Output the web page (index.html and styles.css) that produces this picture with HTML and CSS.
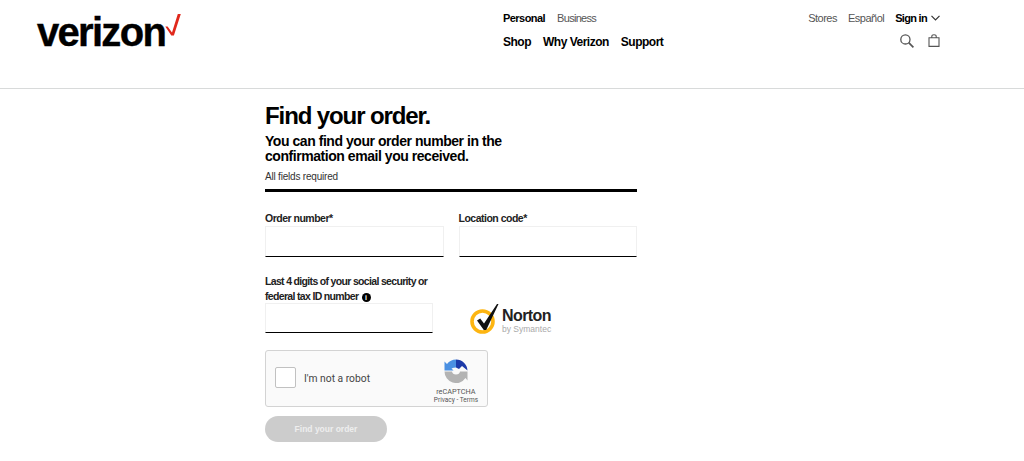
FILE: index.html
```html
<!DOCTYPE html>
<html lang="en">
<head>
    <meta charset="UTF-8">
    <meta name="viewport" content="width=device-width, initial-scale=1.0">
    <title>Find your order</title>
    <link rel="stylesheet" href="styles.css">
</head>
<body>
    <header class="site-header">
        <a class="logo" href="#">
            <span class="logo-word">verizon</span>
            <svg class="logo-check" width="16" height="22" viewBox="0 0 16 22"><path d="M0.3 12.5 H2.6 L7 18.5 L12.8 0 H15.8 L8.9 21.5 H6.3 Z" fill="#e0281c"/></svg>
        </a>
        <nav class="main-nav">
            <div class="nav-top">
                <a class="active" href="#">Personal</a>
                <a href="#">Business</a>
            </div>
            <div class="nav-bottom">
                <a href="#">Shop</a>
                <a href="#">Why Verizon</a>
                <a href="#">Support</a>
            </div>
        </nav>
        <div class="util-nav">
            <div class="util-links">
                <a href="#">Stores</a>
                <a href="#">Español</a>
                <a class="sign-in" href="#">Sign in</a>
                <svg width="9" height="6" viewBox="0 0 9 6"><path d="M0.5 0.8 L4.5 4.8 L8.5 0.8" fill="none" stroke="#333" stroke-width="1.2"/></svg>
            </div>
            <div class="util-icons">
                <svg width="14" height="14" viewBox="0 0 14 14"><circle cx="5.4" cy="5.4" r="4.6" fill="none" stroke="#555" stroke-width="1.3"/><path d="M8.7 8.7 L13.4 13.4" stroke="#555" stroke-width="1.7"/></svg>
                <svg width="12" height="13" viewBox="0 0 12 13"><path d="M1 3.8 H11 V12.4 H1 Z M3.8 3.8 V2.2 C3.8 0.2 8.2 0.2 8.2 2.2 V3.8" fill="none" stroke="#555" stroke-width="1.1"/></svg>
            </div>
        </div>
    </header>

    <main class="order-form">
        <h1>Find your order.</h1>
        <p class="intro">You can find your order number in the<br>confirmation email you received.</p>
        <p class="required">All fields required</p>

        <div class="field-row">
            <div class="field">
                <label for="order_number">Order number*</label>
                <input type="text" id="order_number">
            </div>
            <div class="field">
                <label for="location_code">Location code*</label>
                <input type="text" id="location_code">
            </div>
        </div>

        <div class="ssn-row">
            <div class="field ssn-field">
                <label for="ssn">Last 4 digits of your social security or<br>federal tax ID number <span class="info">i</span></label>
                <input type="text" id="ssn">
            </div>
            <div class="norton">
                <svg width="31" height="34" viewBox="0 0 31 34">
                    <circle cx="12.5" cy="18.5" r="10.5" fill="none" stroke="#fdb511" stroke-width="3.6"/>
                    <path d="M7 17.5 L10.2 15.5 L14 20.5 L27 1 L28.5 1 L16.2 27 H13.8 Z" fill="#111"/>
                </svg>
                <div class="norton-text">
                    <span class="norton-name">Norton</span>
                    <span class="norton-by">by Symantec</span>
                </div>
            </div>
        </div>

        <div class="recaptcha">
            <div class="recaptcha-left">
                <span class="recaptcha-box"></span>
                <span class="recaptcha-label">I'm not a robot</span>
            </div>
            <div class="recaptcha-brand">
                <svg width="24" height="24" viewBox="0 0 24 24">
                    <path d="M12 0.5 A11.5 11.5 0 0 1 23.5 11.5 L18 7 L15 10 L12 8.5 Z" fill="#1c3aa9"/>
                    <path d="M12 0.5 A11.5 11.5 0 0 0 3 5 L0.5 2.5 V11.5 H9.5 L7.5 9.5 Q9.5 8.5 12 8.5 Z" fill="#4a90e2"/>
                    <path d="M0.5 12.5 A11.5 11.5 0 0 0 21.5 19 L23.5 21.5 V12.5 H16 Q15.5 15.5 12 15.5 Q8.5 15.5 8 12.5 Z" fill="#b3b3b3"/>
                </svg>
                <span class="recaptcha-name">reCAPTCHA</span>
                <span class="recaptcha-terms">Privacy - Terms</span>
            </div>
        </div>

        <button class="submit" disabled>Find your order</button>
    </main>
</body>
</html>
```

FILE: styles.css
```css
/* General Styles */
body {
    font-family: 'Liberation Sans', Arial, sans-serif;
    margin: 0;
    padding: 0;
    background: #fff;
    color: #000;
}

a {
    color: inherit;
    text-decoration: none;
}

/* Header */
.site-header {
    display: flex;
    height: 88px;
    border-bottom: 1px solid #d8dada;
    padding-left: 37px;
    padding-right: 84px;
}

.logo {
    display: flex;
    align-items: flex-start;
    width: 466px;
    padding-top: 11px;
}

.logo-word {
    font-size: 40px;
    line-height: 42px;
    font-weight: bold;
    letter-spacing: -1.7px;
    -webkit-text-stroke: 0.4px #000;
    color: #000;
}

.logo-check {
    margin-top: 3px;
}

.main-nav {
    padding-top: 11px;
    flex: 1;
}

.nav-top {
    display: flex;
    gap: 12px;
    font-size: 11px;
    line-height: 14px;
    letter-spacing: -0.7px;
    color: #555;
}

.nav-top .active {
    color: #000;
    font-weight: bold;
    letter-spacing: -0.55px;
}

.nav-bottom {
    display: flex;
    gap: 12px;
    margin-top: 10px;
    font-size: 12px;
    line-height: 14px;
    font-weight: bold;
    letter-spacing: -0.5px;
}

.util-nav {
    padding-top: 11px;
}

.util-links {
    display: flex;
    align-items: center;
    gap: 11px;
    font-size: 11px;
    line-height: 14px;
    letter-spacing: -0.5px;
    color: #555;
}

.util-links .sign-in {
    color: #000;
    font-weight: bold;
    letter-spacing: -0.7px;
}

.util-links svg {
    margin-left: -7px;
}

.util-icons {
    display: flex;
    justify-content: flex-end;
    gap: 14px;
    margin-top: 9px;
}

/* Form */
.order-form {
    width: 372px;
    margin-left: 265px;
}

h1 {
    margin: 14px 0 0;
    font-size: 24px;
    line-height: 26px;
    letter-spacing: -1.1px;
}

.intro {
    margin: 5px 0 0;
    font-size: 14px;
    line-height: 15px;
    font-weight: bold;
    letter-spacing: -0.45px;
}

.required {
    margin: 0;
    padding-top: 6px;
    padding-bottom: 6px;
    border-bottom: 3px solid #000;
    font-size: 10px;
    line-height: 13px;
    letter-spacing: -0.2px;
    color: #333;
}

.field-row {
    display: flex;
    gap: 15px;
    margin-top: 19px;
}

.field {
    flex: 1;
}

label {
    display: block;
    font-size: 10.5px;
    line-height: 15px;
    font-weight: bold;
    letter-spacing: -0.5px;
    color: #222;
}

input[type="text"] {
    display: block;
    box-sizing: border-box;
    width: 100%;
    height: 31px;
    border: 1px solid #f0f0f0;
    border-bottom: 1px solid #000;
}

.ssn-row {
    display: flex;
    align-items: flex-end;
    margin-top: 17px;
}

.ssn-field {
    flex: none;
    width: 168px;
}

.ssn-field label {
    margin-bottom: -1px;
    white-space: nowrap;
    letter-spacing: -0.67px;
}

.ssn-field input[type="text"] {
    height: 30px;
}

.info {
    display: inline-block;
    width: 9px;
    height: 9px;
    margin-left: 1px;
    border-radius: 50%;
    background: #000;
    color: #fff;
    font-size: 7px;
    line-height: 9px;
    letter-spacing: 0;
    text-align: center;
}

.norton {
    display: flex;
    align-items: flex-end;
    margin-left: 37px;
    margin-bottom: -4px;
}

.norton-text {
    display: flex;
    flex-direction: column;
    margin-left: 1px;
    margin-bottom: 1px;
}

.norton-name {
    font-size: 16px;
    line-height: 15px;
    font-weight: bold;
    letter-spacing: -0.6px;
    color: #222;
}

.norton-by {
    font-size: 8.5px;
    line-height: 13px;
    color: #aaa;
}

/* reCAPTCHA widget */
.recaptcha {
    display: flex;
    justify-content: space-between;
    box-sizing: border-box;
    width: 223px;
    height: 57px;
    margin-top: 17px;
    padding: 0 9px;
    background: #fafafa;
    border: 1px solid #d3d3d3;
    border-radius: 3px;
    font-family: Roboto, sans-serif;
}

.recaptcha-left {
    display: flex;
    align-items: center;
}

.recaptcha-box {
    width: 19px;
    height: 19px;
    margin-bottom: 2px;
    background: #fff;
    border: 1px solid #c1c1c1;
    border-radius: 2px;
}

.recaptcha-label {
    margin-left: 8px;
    font-size: 10.3px;
    color: #444;
}

.recaptcha-brand {
    display: flex;
    flex-direction: column;
    align-items: center;
    padding-top: 8px;
    font-size: 7.3px;
    color: #555;
}

.recaptcha-name {
    margin-top: 4px;
    line-height: 9px;
}

.recaptcha-terms {
    font-size: 6.5px;
    line-height: 9px;
}

.submit {
    display: block;
    width: 122px;
    height: 26px;
    margin-top: 9px;
    padding: 0;
    background: #ccc;
    border: none;
    border-radius: 13px;
    color: #eee;
    font-family: 'Liberation Sans', Arial, sans-serif;
    font-size: 8.5px;
    font-weight: bold;
}
```
